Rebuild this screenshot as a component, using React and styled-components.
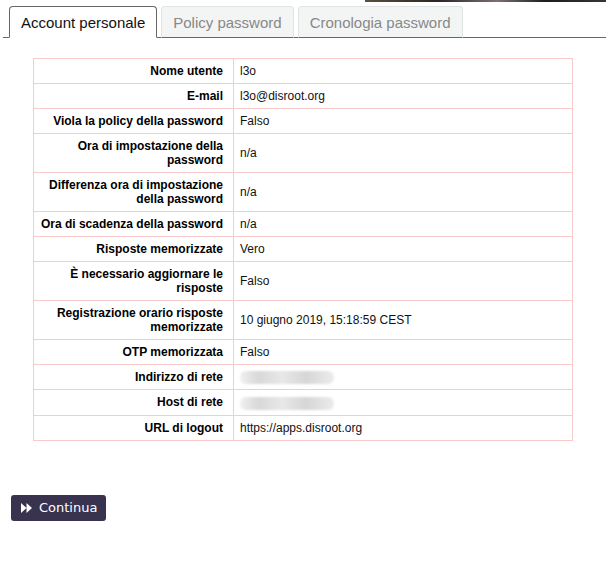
import React from 'react';
import styled, { createGlobalStyle } from 'styled-components';

const GlobalStyle = createGlobalStyle`
  html, body {
    margin: 0;
    padding: 0;
    background: #fff;
    font-family: "Liberation Sans", Arial, sans-serif;
  }
`;

const rows = [
  ['Nome utente', 'l3o'],
  ['E-mail', 'l3o@disroot.org'],
  ['Viola la policy della password', 'Falso'],
  ['Ora di impostazione della password', 'n/a'],
  ['Differenza ora di impostazione della password', 'n/a'],
  ['Ora di scadenza della password', 'n/a'],
  ['Risposte memorizzate', 'Vero'],
  ['È necessario aggiornare le risposte', 'Falso'],
  ['Registrazione orario risposte memorizzate', '10 giugno 2019, 15:18:59 CEST'],
  ['OTP memorizzata', 'Falso'],
  ['Indirizzo di rete', null],
  ['Host di rete', null],
  ['URL di logout', 'https://apps.disroot.org'],
];

function App() {
  return (
    <Page>
      <GlobalStyle />
      <TopStrip />
      <Tabs>
        <Tab active>Account personale</Tab>
        <Tab>Policy password</Tab>
        <Tab>Cronologia password</Tab>
      </Tabs>
      <Table>
        <tbody>
          {rows.map(([label, value]) => (
            <tr key={label}>
              <Label>{label}</Label>
              <Value>{value === null ? <Blurred /> : value}</Value>
            </tr>
          ))}
        </tbody>
      </Table>
      <Actions>
        <Button>
          <svg width="11" height="10" viewBox="0 0 11 10">
            <path d="M0 0 L5.5 5 L0 10 Z M5.5 0 L11 5 L5.5 10 Z" fill="#fff" />
          </svg>
          Continua
        </Button>
      </Actions>
    </Page>
  );
}

export default App;

const Page = styled.div`
  width: 606px;
  min-height: 583px;
`;

const TopStrip = styled.div`
  height: 2px;
  margin-left: 365px;
  background: linear-gradient(90deg, #5a5040, #2a2622 30%, #7a7078 55%, #1e1c1c 75%, #3a3434);
`;

const Tabs = styled.div`
  display: flex;
  gap: 4px;
  margin: 4px 0 0 3px;
  padding-left: 6px;
  border-bottom: 1px solid #666;
`;

const Tab = styled.div`
  height: 30px;
  padding: 0 11px;
  display: flex;
  align-items: center;
  font-size: 15px;
  border-radius: 4px 4px 0 0;
  margin-bottom: -1px;
  color: ${(p) => (p.active ? '#111' : '#888')};
  background: ${(p) => (p.active ? '#fff' : '#f3f5f5')};
  border: 1px solid ${(p) => (p.active ? '#666' : '#dfe5e5')};
  border-bottom-color: ${(p) => (p.active ? '#fff' : '#666')};
`;

const Table = styled.table`
  width: 540px;
  margin: 20px auto 0;
  border-collapse: collapse;
  font-size: 12px;
  line-height: 14px;
  color: #111;
  td {
    border: 1px solid #f8caca;
    padding: 5px 6px;
  }
`;

const Label = styled.td`
  width: 183px;
  text-align: right;
  font-weight: bold;
  color: #000;
  && {
    padding-right: 10px;
  }
`;

const Value = styled.td`
  text-align: left;
`;

const Blurred = styled.span`
  display: inline-block;
  vertical-align: middle;
  width: 94px;
  height: 13px;
  border-radius: 6px;
  background: linear-gradient(90deg, #f0f0f0, #d8d8d8 20%, #e8e8e8 45%, #d6d6d6 70%, #ececec);
  filter: blur(0.8px);
`;

const Actions = styled.div`
  padding: 54px 0 0 11px;
`;

const Button = styled.button`
  display: inline-flex;
  align-items: center;
  gap: 7px;
  height: 26px;
  padding: 0 9px 0 10px;
  border: none;
  border-radius: 3px;
  background: #3a3350;
  color: #fff;
  font-family: "DejaVu Sans", sans-serif;
  font-size: 13px;
  cursor: pointer;
`;
